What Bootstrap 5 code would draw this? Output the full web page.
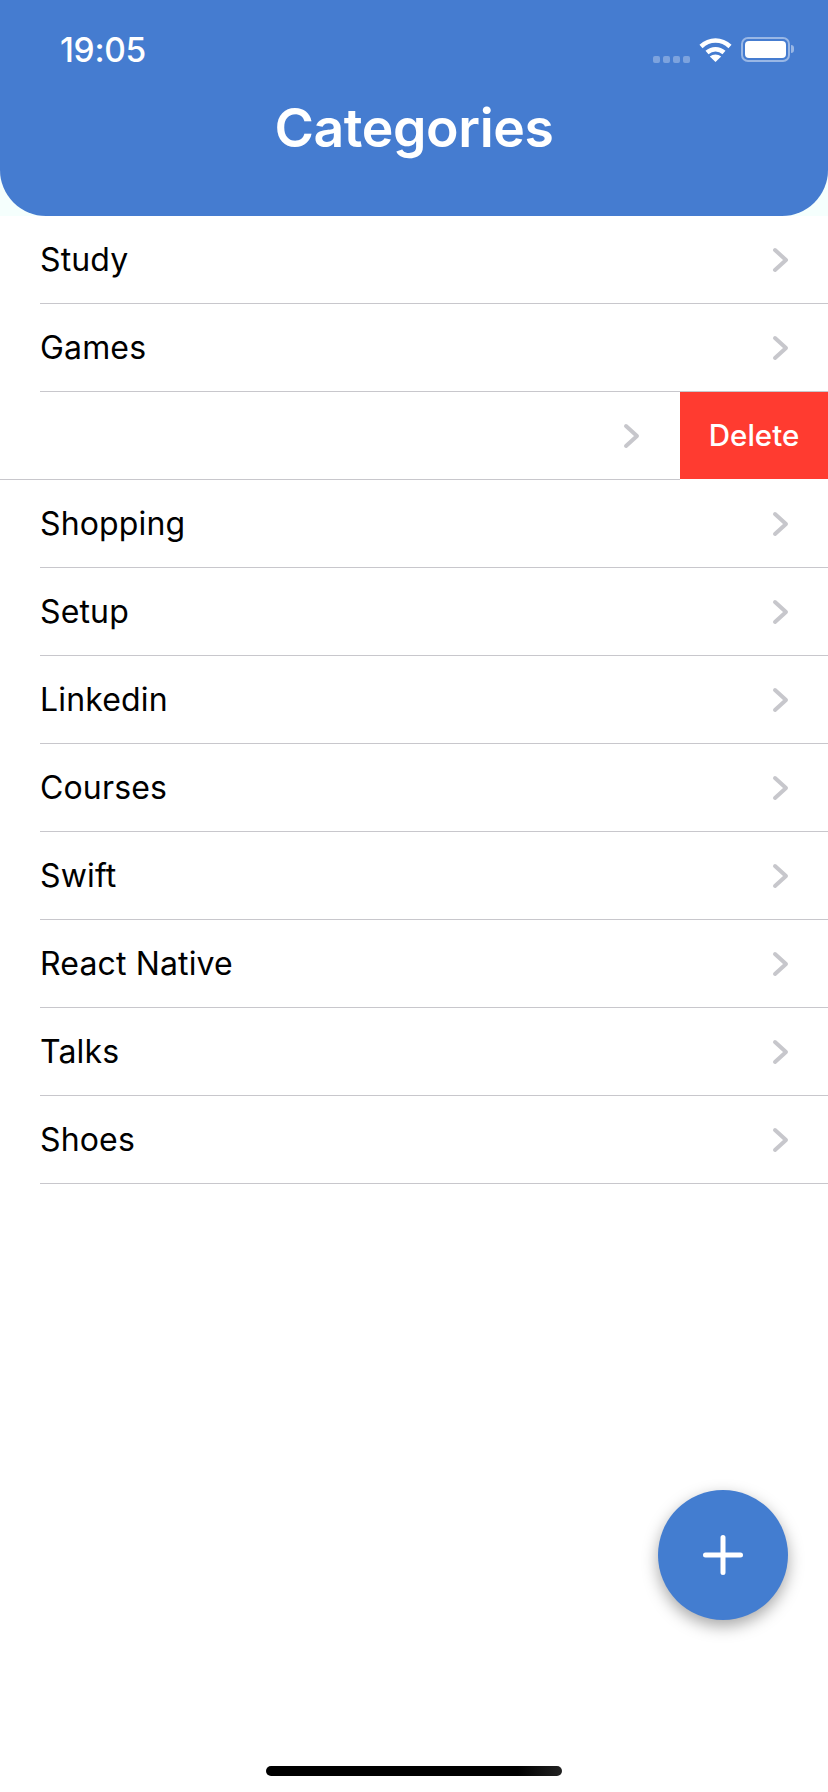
<!DOCTYPE html>
<html lang="en">
<head>
    <meta charset="UTF-8">
    <meta name="viewport" content="width=device-width, initial-scale=1.0">
    <title>Categories</title>
    <link href="https://cdn.jsdelivr.net/npm/bootstrap@5.3.0/dist/css/bootstrap.min.css" rel="stylesheet">
    <style>
        body { font-family: Inter, "Liberation Sans", sans-serif; background: #fff; color: #000; }
        .phone { width: 828px; height: 1792px; }
        .top-wrap { background: #f5fffd; }
        .app-header { height: 216px; background: #457cd0; border-radius: 0 0 46px 46px; padding: 26px 34px 0 60px; }
        .status-time { font-size: 33.5px; font-weight: 500; line-height: 48px; letter-spacing: -.3px; }
        .status-icons { height: 48px; }
        .dots { gap: 3px; margin-top: 18px; margin-right: 9px; }
        .dots i { width: 7px; height: 7px; border-radius: 2px; background: rgba(255,255,255,.3); display: block; }
        .wifi { margin-right: 9px; margin-top: -2px; }
        .batt { width: 49px; height: 25px; border: 2px solid rgba(255,255,255,.45); border-radius: 7px; padding: 2px; margin-top: -2px; }
        .batt i { display: block; height: 100%; background: #fff; border-radius: 4px; }
        .batt-nub { width: 3px; height: 8px; background: rgba(255,255,255,.45); border-radius: 0 3px 3px 0; margin-left: 1px; margin-top: -2px; }
        .app-title { font-size: 53.5px; font-weight: 600; line-height: 64px; margin: 22px -34px 0 -60px; letter-spacing: -.4px; }
        .cat-list { --bs-list-group-color: #000; --bs-list-group-bg: transparent; }
        .cat-item { padding: 0 0 0 40px; border: 0; }
        .cat-row { height: 88px; font-size: 32px; letter-spacing: .15px; border-bottom: 1px solid #c8c7cc; padding-right: 38px; }
        .chev { width: 18px; height: 26px; flex: none; }
        .swiped-item { padding-left: 0; }
        .swiped-row { padding-right: 39px; }
        .del-btn { width: 148px; height: 87px; flex: none; background: #ff3b30; color: #fff; font-size: 29.5px; font-weight: 500; border-radius: 0; border: 0; padding: 0; }
        .del-btn:hover { background: #ff3b30; color: #fff; }
        .fab { position: absolute; left: 658px; top: 1490px; width: 130px; height: 130px; border-radius: 50%; background: #437dd0; border: 0; padding: 0; box-shadow: 0 6px 16px rgba(0,0,0,.35); }
        .home-bar { width: 296px; height: 10px; border-radius: 5px; margin: 0 auto 16px; background: linear-gradient(90deg, #000 85%, #222); }
    </style>
</head>
<body>
    <svg class="d-none">
        <symbol id="chevron" viewBox="0 0 18 26">
            <path d="M3 3l11 10L3 23" fill="none" stroke="#c7c7cc" stroke-width="4" stroke-linecap="round" stroke-linejoin="round"/>
        </symbol>
    </svg>

    <div class="phone position-relative d-flex flex-column overflow-hidden">
        <div class="top-wrap">
            <header class="app-header text-white">
                <div class="d-flex justify-content-between align-items-center">
                    <span class="status-time">19:05</span>
                    <div class="status-icons d-flex align-items-center">
                        <div class="dots d-flex"><i></i><i></i><i></i><i></i></div>
                        <svg class="wifi" width="33" height="25" viewBox="0 0 33 25">
                            <path d="M2 9.500C10.500 1.500 22.500 1.500 31 9.500" fill="none" stroke="#fff" stroke-width="4.500"/>
                            <path d="M8 15.500C13 11 20 11 25 15.500" fill="none" stroke="#fff" stroke-width="4.500"/>
                            <path d="M16.500 25L10.800 19.500C14 16.800 19 16.800 22.200 19.500Z" fill="#fff"/>
                        </svg>
                        <div class="batt"><i></i></div>
                        <div class="batt-nub"></div>
                    </div>
                </div>
                <h1 class="app-title text-center">Categories</h1>
            </header>
        </div>

        <ul class="list-group list-group-flush cat-list rounded-0">
            <li class="list-group-item cat-item">
                <div class="cat-row d-flex justify-content-between align-items-center">Study <svg class="chev"><use href="#chevron"/></svg></div>
            </li>
            <li class="list-group-item cat-item">
                <div class="cat-row d-flex justify-content-between align-items-center">Games <svg class="chev"><use href="#chevron"/></svg></div>
            </li>
            <li class="list-group-item cat-item swiped-item d-flex align-items-start">
                <div class="cat-row swiped-row flex-grow-1 d-flex justify-content-end align-items-center">
                    <svg class="chev"><use href="#chevron"/></svg>
                </div>
                <button type="button" class="btn del-btn">Delete</button>
            </li>
            <li class="list-group-item cat-item">
                <div class="cat-row d-flex justify-content-between align-items-center">Shopping <svg class="chev"><use href="#chevron"/></svg></div>
            </li>
            <li class="list-group-item cat-item">
                <div class="cat-row d-flex justify-content-between align-items-center">Setup <svg class="chev"><use href="#chevron"/></svg></div>
            </li>
            <li class="list-group-item cat-item">
                <div class="cat-row d-flex justify-content-between align-items-center">Linkedin <svg class="chev"><use href="#chevron"/></svg></div>
            </li>
            <li class="list-group-item cat-item">
                <div class="cat-row d-flex justify-content-between align-items-center">Courses <svg class="chev"><use href="#chevron"/></svg></div>
            </li>
            <li class="list-group-item cat-item">
                <div class="cat-row d-flex justify-content-between align-items-center">Swift <svg class="chev"><use href="#chevron"/></svg></div>
            </li>
            <li class="list-group-item cat-item">
                <div class="cat-row d-flex justify-content-between align-items-center">React Native <svg class="chev"><use href="#chevron"/></svg></div>
            </li>
            <li class="list-group-item cat-item">
                <div class="cat-row d-flex justify-content-between align-items-center">Talks <svg class="chev"><use href="#chevron"/></svg></div>
            </li>
            <li class="list-group-item cat-item">
                <div class="cat-row d-flex justify-content-between align-items-center">Shoes <svg class="chev"><use href="#chevron"/></svg></div>
            </li>
        </ul>

        <div class="home-bar mt-auto"></div>

        <button type="button" class="btn fab d-flex align-items-center justify-content-center" aria-label="Add">
            <svg width="40" height="40" viewBox="0 0 40 40">
                <path d="M20 2.500v35M2.500 20h35" stroke="#fff" stroke-width="5" stroke-linecap="round"/>
            </svg>
        </button>
    </div>
</body>
</html>
